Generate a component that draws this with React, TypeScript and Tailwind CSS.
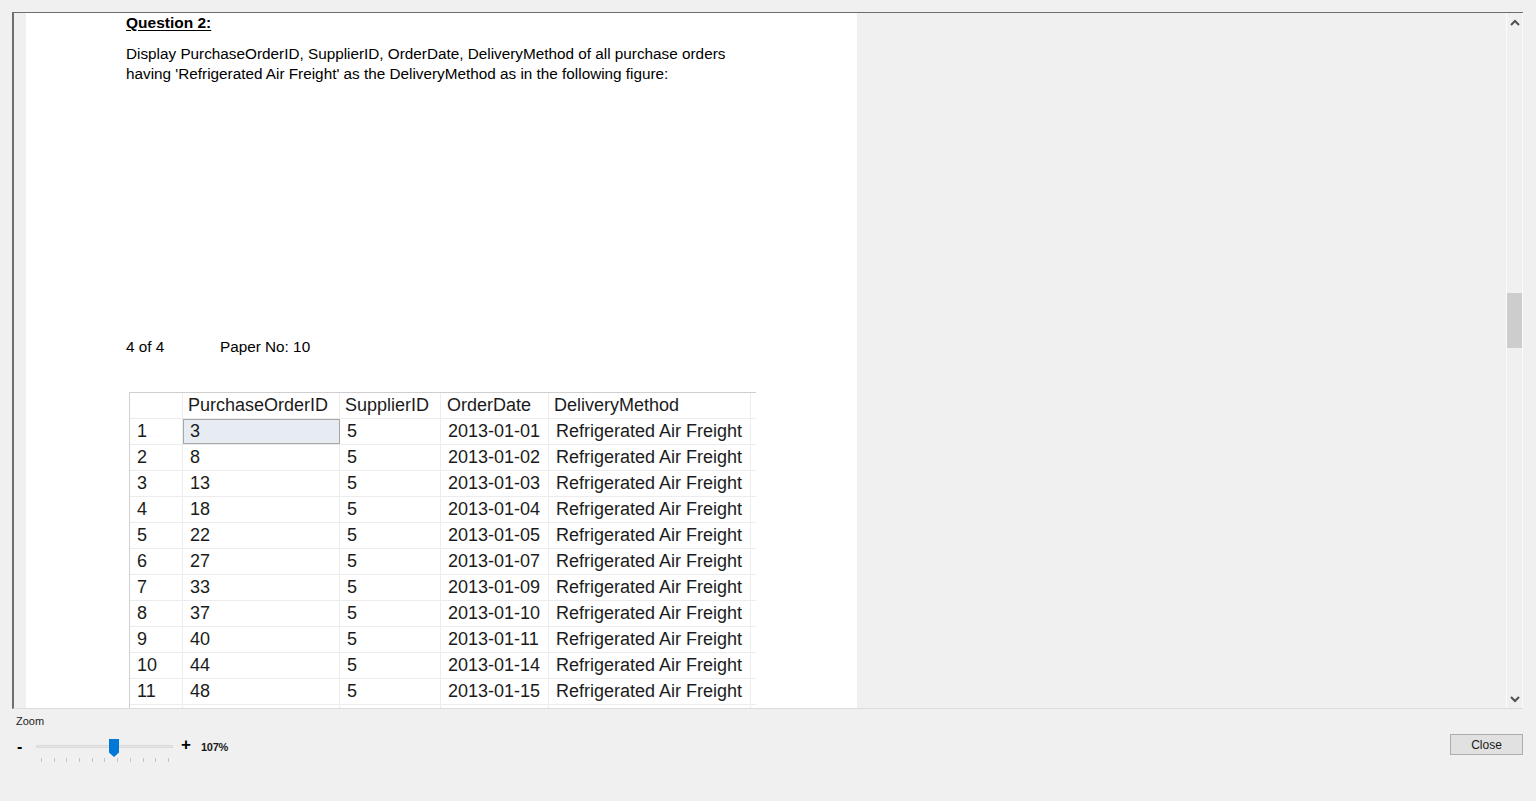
const rows = [
  { n: 1, id: 3, s: 5, d: '2013-01-01' },
  { n: 2, id: 8, s: 5, d: '2013-01-02' },
  { n: 3, id: 13, s: 5, d: '2013-01-03' },
  { n: 4, id: 18, s: 5, d: '2013-01-04' },
  { n: 5, id: 22, s: 5, d: '2013-01-05' },
  { n: 6, id: 27, s: 5, d: '2013-01-07' },
  { n: 7, id: 33, s: 5, d: '2013-01-09' },
  { n: 8, id: 37, s: 5, d: '2013-01-10' },
  { n: 9, id: 40, s: 5, d: '2013-01-11' },
  { n: 10, id: 44, s: 5, d: '2013-01-14' },
  { n: 11, id: 48, s: 5, d: '2013-01-15' },
];

function Chevron({ up }: { up?: boolean }) {
  return (
    <svg width="10" height="7" viewBox="0 0 10 7">
      <path
        d={up ? 'M1 6 L5 2 L9 6' : 'M1 1 L5 5 L9 1'}
        fill="none"
        stroke="#505050"
        strokeWidth="2"
      />
    </svg>
  );
}

function ResultGrid() {
  return (
    <div className="ml-[3px] w-[627px] border-l border-t border-[#cfcfcf] bg-white text-[18px] leading-[25px] text-[#1b1b1b]">
      <div className="flex h-[26px] border-b border-[#ececec]">
        <div className="w-[53px] border-r border-[#ececec]" />
        <div className="w-[157px] border-r border-[#ececec] pl-[5px]">PurchaseOrderID</div>
        <div className="w-[101px] border-r border-[#ececec] pl-[5px]">SupplierID</div>
        <div className="w-[108px] border-r border-[#ececec] pl-[6px]">OrderDate</div>
        <div className="w-[202px] border-r border-[#ececec] pl-[5px]">DeliveryMethod</div>
        <div className="flex-1" />
      </div>
      {rows.map((r) => (
        <div key={r.n} className="flex h-[26px] border-b border-[#ececec]">
          <div className="w-[53px] border-r border-[#ececec] pl-[7px]">{r.n}</div>
          <div
            className={
              r.n === 1
                ? 'w-[157px] border border-[#a6a6a6] bg-[#e6ecf2] pl-[6px] leading-[23px]'
                : 'w-[157px] border-r border-[#ececec] pl-[7px]'
            }
          >
            {r.id}
          </div>
          <div className="w-[101px] border-r border-[#ececec] pl-[7px]">{r.s}</div>
          <div className="w-[108px] border-r border-[#ececec] pl-[7px]">{r.d}</div>
          <div className="w-[202px] border-r border-[#ececec] pl-[7px]">Refrigerated Air Freight</div>
          <div className="flex-1" />
        </div>
      ))}
      {/* next row, scrolled out of view */}
      <div className="flex h-[26px]">
        <div className="w-[53px] border-r border-[#ececec]" />
        <div className="w-[157px] border-r border-[#ececec]" />
        <div className="w-[101px] border-r border-[#ececec]" />
        <div className="w-[108px] border-r border-[#ececec]" />
        <div className="w-[202px] border-r border-[#ececec]" />
      </div>
    </div>
  );
}

export default function App() {
  const ticks = Array.from({ length: 11 });
  return (
    <div className="h-[801px] w-[1536px] overflow-hidden bg-[#f0f0f0] font-['Liberation_Sans',Arial,sans-serif] text-black">
      <div className="h-[12px]" />
      {/* report viewer panel */}
      <div className="ml-[12px] flex h-[697px] w-[1511px] border-l-2 border-t border-b border-[#6e6e6e] border-b-[#dcdcdc]">
        <div className="w-[12px] bg-[#f0f0f0]" />
        <div className="h-full w-[831px] overflow-hidden bg-white pl-[100px]">
          <div className="text-[15.5px] font-bold leading-[20px] underline underline-offset-[2px]">Question 2:</div>
          <p className="mt-[11px] text-[15.3px] leading-[20px]">
            Display PurchaseOrderID, SupplierID, OrderDate, DeliveryMethod of all purchase orders
            <br />
            having 'Refrigerated Air Freight' as the DeliveryMethod as in the following figure:
          </p>
          <div className="mt-[253px] flex text-[15.3px] leading-[20px]">
            <span className="w-[94px]">4 of 4</span>
            <span>Paper No: 10</span>
          </div>
          <div className="mt-[35px]">
            <ResultGrid />
          </div>
        </div>
        <div className="flex-1 bg-[#f0f0f0]" />
        {/* vertical scrollbar */}
        <div className="flex w-[17px] flex-col border-l border-r border-[#fbfbfb] bg-[#f0f0f0]">
          <div className="flex h-[18px] items-center justify-center">
            <Chevron up />
          </div>
          <div className="mt-[262px] h-[55px] w-[15px] bg-[#cdcdcd]" />
          <div className="flex-1" />
          <div className="flex h-[18px] items-center justify-center">
            <Chevron />
          </div>
        </div>
      </div>
      {/* bottom bar */}
      <div className="flex items-start justify-between">
        <div className="pl-[16px]">
          <div className="mt-[6px] text-[11px] leading-[12px] text-[#1e1e1e]">Zoom</div>
          <div className="mt-[10px] flex h-[26px] items-start">
            <span className="ml-[1px] mt-[2px] w-[19px] text-[16px] font-bold leading-[16px]">-</span>
            <div className="relative h-[26px] w-[137px]">
              <div className="absolute left-0 right-0 top-[8px] h-[3px] border border-[#dadada] bg-[#e7e7e7]" />
              <div className="absolute left-[73px] top-[2px] h-[18px] w-[10px] bg-[#0078d7] [clip-path:polygon(0_0,100%_0,100%_75%,50%_100%,0_75%)]" />
              <div className="absolute left-[5px] right-[4px] top-[21px] flex justify-between">
                {ticks.map((_, i) => (
                  <div key={i} className="h-[4px] w-px bg-[#c4c4c4]" />
                ))}
              </div>
            </div>
            <span className="ml-[8px] w-[20px] text-[17px] font-bold leading-[16px]">+</span>
            <span className="mt-[3px] text-[11px] font-bold leading-[14px] tracking-[-0.3px] text-[#1a1a1a]">107%</span>
          </div>
        </div>
        <button className="mr-[13px] mt-[25px] h-[21px] w-[73px] border border-[#adadad] bg-[#e1e1e1] text-[12px] leading-[18px] text-[#1a1a1a]">
          Close
        </button>
      </div>
    </div>
  );
}
